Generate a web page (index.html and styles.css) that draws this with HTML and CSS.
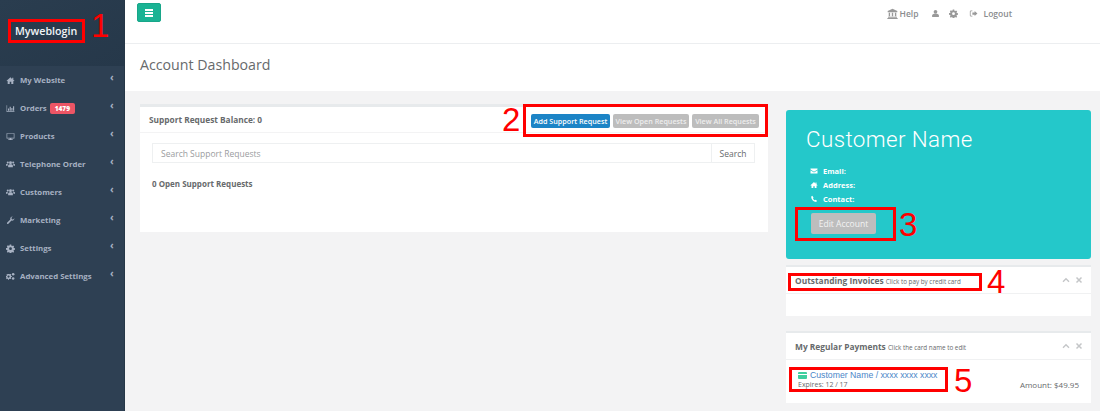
FILE: index.html
```html
<!DOCTYPE html>
<html lang="en">
<head>
<meta charset="utf-8">
<title>Account Dashboard</title>
<link rel="stylesheet" href="styles.css">
</head>
<body>
<svg class="defs" width="0" height="0" aria-hidden="true">
  <symbol id="i-home" viewBox="0 0 16 16"><path d="M8 2 1 8.500l1 1 1-.9V14h3.600v-3.600h2.800V14H13V8.600l1 .9 1-1-2-1.900V3h-2v2.700z"/></symbol>
  <symbol id="i-bars" viewBox="0 0 16 16"><path d="M1 2h1v11h13v1H1z"/><path d="M3.500 8h2v4h-2zM6.500 5h2v7h-2zM9.500 7h2v5h-2zM12.500 4h2v8h-2z"/></symbol>
  <symbol id="i-desk" viewBox="0 0 16 16"><path fill-rule="evenodd" d="M1 2h14v9.500H9.500V13H12v1H4v-1h2.500v-1.500H1zm1.200 1.200v7h11.600v-7z"/></symbol>
  <symbol id="i-users" viewBox="0 0 16 16"><circle cx="8" cy="5" r="2.600"/><circle cx="3.200" cy="4.500" r="1.900"/><circle cx="12.800" cy="4.500" r="1.900"/><path d="M3.800 13V10c0-1.500 1.500-2.500 4.200-2.500s4.200 1 4.200 2.500v3zM0 10V8.500C0 7.300 1.200 6.800 3.700 6.800 3 7.700 2.800 8.700 2.800 10zM16 10V8.500c0-1.200-1.200-1.700-3.700-1.700.7.900.9 1.900.9 3.200z"/></symbol>
  <symbol id="i-wrench" viewBox="0 0 16 16"><path d="M15 4.200a4 4 0 0 1-5.300 3.900L3.800 14a1.500 1.500 0 0 1-2-2l5.900-5.900A4 4 0 0 1 12 1L9.700 3.300l.6 2.300 2.300.6z"/></symbol>
  <symbol id="i-cog" viewBox="0 0 16 16"><path fill-rule="evenodd" d="M6.700 1h2.600l.4 2 1.300.6 1.700-1.100 1.800 1.800-1.100 1.700.6 1.300 2 .4v2.600l-2 .4-.6 1.300 1.100 1.700-1.800 1.800-1.700-1.100-1.300.6-.4 2H6.700l-.4-2-1.300-.6-1.700 1.100-1.800-1.800 1.100-1.700-.6-1.300-2-.4V7.300l2-.4.6-1.300-1.100-1.700 1.800-1.800 1.700 1.100 1.300-.6zM8 5.800a2.500 2.500 0 1 0 0 5 2.500 2.500 0 0 0 0-5z"/></symbol>
  <symbol id="i-cogs" viewBox="0 0 16 16"><path fill-rule="evenodd" d="M5.500 3.500 7 4l1.200-.6 1 1L8.600 5.600l.5 1.300 1.300.4v1.400l-1.300.4-.5 1.300.6 1.200-1 1L7 12.100l-1.500.5-.4 1.300H3.700l-.4-1.300-1.300-.5-1.200.6-.6-.9.6-1.300L.3 9.200 0 8.700V7.300l1-.4.500-1.300L1 4.400l.9-1 1.200.6 1-.5zM4.500 6a2 2 0 1 0 0 4 2 2 0 0 0 0-4z"/><circle cx="12.700" cy="4" r="2.300"/><circle cx="12.700" cy="11.500" r="2.300"/></symbol>
  <symbol id="i-bank" viewBox="0 0 16 16"><path d="M8 1 1 4.500V6h14V4.500zM2.500 7h2v5h-2zM7 7h2v5H7zM11.500 7h2v5h-2zM1.500 12.800h13V14h-13zM.5 14.500h15V16H.5z"/></symbol>
  <symbol id="i-user" viewBox="0 0 16 16"><circle cx="8" cy="5" r="3.300"/><path d="M2 14v-2.500C2 9.500 4 8.300 8 8.300s6 1.200 6 3.200V14z"/></symbol>
  <symbol id="i-logout" viewBox="0 0 16 16"><path d="M6 2.500H3.500a2 2 0 0 0-2 2v7a2 2 0 0 0 2 2H6V12H3.500a.6.600 0 0 1-.6-.6V4.600a.6.600 0 0 1 .6-.6H6z"/><path d="M10 3.500 15 8l-5 4.500V10H6V6h4z"/></symbol>
  <symbol id="i-mail" viewBox="0 0 16 16"><path d="M1 3h14v2L8 9.500 1 5z"/><path d="M1 6.500 8 11l7-4.500V13H1z"/></symbol>
  <symbol id="i-phone" viewBox="0 0 16 16"><path d="M4.500 1.500 2.500 3c-.5 5 4.500 11 10 11l1.500-2.500-3-2-1.500 1.200C8 10 6.500 8 6 6.500L7 5z"/></symbol>
  <symbol id="i-up" viewBox="0 0 8 8"><path d="M1 5.800 4 2.800l3 3" fill="none" stroke="currentColor" stroke-width="1.400"/></symbol>
  <symbol id="i-x" viewBox="0 0 8 8"><path d="M1.500 1.500l5 5M6.500 1.500l-5 5" fill="none" stroke="currentColor" stroke-width="1.500"/></symbol>
</svg>

<div class="app">
  <aside class="sidebar">
    <div class="brand">Myweblogin</div>
    <nav class="nav">
      <a class="nav-item"><svg class="nav-icon"><use href="#i-home"/></svg><span>My Website</span><i class="caret">‹</i></a>
      <a class="nav-item"><svg class="nav-icon"><use href="#i-bars"/></svg><span>Orders</span><b class="badge">1479</b><i class="caret">‹</i></a>
      <a class="nav-item"><svg class="nav-icon"><use href="#i-desk"/></svg><span>Products</span><i class="caret">‹</i></a>
      <a class="nav-item"><svg class="nav-icon"><use href="#i-users"/></svg><span>Telephone Order</span><i class="caret">‹</i></a>
      <a class="nav-item"><svg class="nav-icon"><use href="#i-users"/></svg><span>Customers</span><i class="caret">‹</i></a>
      <a class="nav-item"><svg class="nav-icon"><use href="#i-wrench"/></svg><span>Marketing</span><i class="caret">‹</i></a>
      <a class="nav-item"><svg class="nav-icon"><use href="#i-cog"/></svg><span>Settings</span><i class="caret">‹</i></a>
      <a class="nav-item"><svg class="nav-icon"><use href="#i-cogs"/></svg><span>Advanced Settings</span><i class="caret">‹</i></a>
    </nav>
  </aside>

  <main class="main">
    <header class="topbar">
      <button class="menu-btn" aria-label="Menu"><span></span><span></span><span></span></button>
      <div class="top-links">
        <a class="top-link"><svg class="top-icon"><use href="#i-bank"/></svg>Help</a>
        <a class="top-link"><svg class="top-icon small"><use href="#i-user"/></svg></a>
        <a class="top-link"><svg class="top-icon small"><use href="#i-cog"/></svg></a>
        <a class="top-link"><svg class="top-icon small"><use href="#i-logout"/></svg>Logout</a>
      </div>
    </header>
    <div class="page-head"><h1>Account Dashboard</h1></div>

    <div class="content">
      <section class="left-col">
        <div class="card support">
          <div class="support-head">
            <h2>Support Request Balance: 0</h2>
            <div class="btn-row">
              <button class="btn btn-blue">Add Support Request</button>
              <button class="btn btn-grey">View Open Requests</button>
              <button class="btn btn-grey">View All Requests</button>
            </div>
          </div>
          <div class="support-body">
            <div class="search">
              <span class="search-input">Search Support Requests</span>
              <span class="search-btn">Search</span>
            </div>
            <p class="open-count">0 Open Support Requests</p>
          </div>
        </div>
      </section>

      <section class="right-col">
        <div class="customer">
          <h2>Customer Name</h2>
          <ul class="contact">
            <li><svg class="c-icon"><use href="#i-mail"/></svg>Email:</li>
            <li><svg class="c-icon"><use href="#i-home"/></svg>Address:</li>
            <li><svg class="c-icon"><use href="#i-phone"/></svg>Contact:</li>
          </ul>
          <button class="edit-btn">Edit Account</button>
        </div>

        <div class="card widget invoices">
          <div class="widget-head">
            <h3>Outstanding Invoices <small>Click to pay by credit card</small></h3>
            <span class="tools"><svg class="tool"><use href="#i-up"/></svg><svg class="tool"><use href="#i-x"/></svg></span>
          </div>
        </div>

        <div class="card widget payments">
          <div class="widget-head">
            <h3>My Regular Payments <small>Click the card name to edit</small></h3>
            <span class="tools"><svg class="tool"><use href="#i-up"/></svg><svg class="tool"><use href="#i-x"/></svg></span>
          </div>
          <div class="pay-row">
            <div>
              <a class="pay-name"><span class="card-icon"></span>Customer Name / xxxx xxxx xxxx</a>
              <div class="pay-exp">Expires: 12 / 17</div>
            </div>
            <div class="pay-amount">Amount: $49.95</div>
          </div>
        </div>
      </section>
    </div>
  </main>
</div>

<div class="mark box1"></div><div class="num num1">1</div>
<div class="mark box2"></div><div class="num num2">2</div>
<div class="mark box3"></div><div class="num num3">3</div>
<div class="mark box4"></div><div class="num num4">4</div>
<div class="mark box5"></div><div class="num num5">5</div>
</body>
</html>
```

FILE: styles.css
```css
* { box-sizing: border-box; }
html, body { margin: 0; height: 411px; overflow: hidden; }
body { font-family: "Open Sans", "Liberation Sans", sans-serif; color: #676a6c; background: #f3f3f4; position: relative; }
.defs { position: absolute; }
svg { fill: currentColor; }

.app { display: flex; height: 411px; }

/* Sidebar */
.sidebar { width: 125px; flex: none; background: #2e4053; color: #a7b1c2; border-right: 1px solid #263747; }
.brand { height: 66px; padding: 23px 0 0 15px; background: linear-gradient(150deg, #2a3d4f, #26384a); color: #f2f5f7; font-size: 10.700px; font-weight: 600; line-height: 17px; }
.nav { display: flex; flex-direction: column; }
.nav-item { height: 28px; display: flex; align-items: center; padding: 0 0 0 6px; font-size: 7.800px; font-weight: 700; position: relative; }
.nav-icon { width: 9px; height: 9px; margin-right: 5px; flex: none; }
.caret { position: absolute; left: 110px; top: 5px; font-style: normal; font-size: 10px; line-height: 12px; }
.badge { background: #ed5565; color: #fff; font-size: 6.500px; line-height: 11px; padding: 0 5px; border-radius: 2px; margin-left: 3px; }

/* Main */
.main { flex: 1; min-width: 0; display: flex; flex-direction: column; }
.topbar { height: 44px; background: #fff; border-bottom: 1px solid #eceef0; display: flex; justify-content: space-between; padding: 3px 88px 0 12px; }
.menu-btn { width: 24px; height: 19px; padding: 0; background: #1ab394; border: 1px solid #18a689; border-radius: 2px; display: flex; flex-direction: column; gap: 1px; align-items: center; justify-content: center; }
.menu-btn span { width: 8px; height: 2px; background: #fff; display: block; }
.top-links { display: flex; height: 20px; color: #8a8c8e; font-size: 8.500px; font-weight: 600; }
.top-link { display: flex; align-items: center; gap: 2px; height: 20px; margin-left: 12px; }
.top-link:nth-child(3) { margin-left: 9px; }
.top-icon { width: 11px; height: 11px; color: #999; }
.top-icon.small { width: 9px; height: 9px; }
.top-link:last-child { margin-left: 11px; }
.top-link:last-child .top-icon { margin-right: 4px; }
.page-head { height: 47px; background: #fff; padding: 11px 0 0 15px; }
.page-head h1 { margin: 0; font-size: 14.200px; line-height: 20px; font-weight: 400; color: #676a6c; }

.content { flex: 1; display: flex; padding: 13px 9px 0 15px; }
.left-col { width: 628px; flex: none; }
.right-col { width: 305px; flex: none; margin-left: 18px; padding-top: 6px; display: flex; flex-direction: column; }

.card { background: #fff; border-top: 3px solid #e7eaec; }
.support { height: 128px; }
.support-head { height: 26px; padding: 0 9px; display: flex; align-items: center; justify-content: space-between; border-bottom: 1px solid #f3f3f4; }
.support-head h2 { margin: 0; font-size: 8.300px; font-weight: 700; color: #676a6c; }
.btn-row { display: flex; gap: 3px; padding-top: 3px; }
.btn { height: 14px; border: 0; padding: 0; border-radius: 2px; font-family: inherit; font-size: 7.200px; font-weight: 600; line-height: 14px; color: #fff; }
.btn-blue { width: 79px; background: #1c84c6; }
.btn-grey { width: 76px; background: #bdbdbd; color: #eee; }
.btn-grey:last-child { width: 67px; }
.support-body { padding: 10px 13px 0 12px; }
.search { display: flex; height: 20px; border: 1px solid #eef0f1; font-size: 8.500px; line-height: 19px; }
.search-input { flex: 1; padding-left: 8px; color: #9a9c9e; }
.search-btn { width: 43px; text-align: center; border-left: 1px solid #eef0f1; color: #676a6c; }
.open-count { margin: 15px 0 0; font-size: 8px; line-height: 12px; font-weight: 700; }

.customer { height: 149px; background: #24c8ca; border-radius: 3px; color: #fff; padding: 16px 0 0 20px; }
.customer h2 { margin: 0; font-family: Roboto, "Liberation Sans", sans-serif; font-size: 22.400px; line-height: 26px; font-weight: 300; letter-spacing: .4px; }
.contact { list-style: none; margin: 12px 0 0; padding: 0 0 0 4px; font-size: 7.500px; font-weight: 700; line-height: 14px; }
.contact li { display: flex; align-items: center; gap: 5px; }
.c-icon { width: 8px; height: 8px; }
.edit-btn { display: block; margin: 7px 0 0 5px; width: 65px; height: 21px; border: 0; border-radius: 2px; background: #bdbdbd; color: #f3f3f3; font-family: inherit; font-size: 8.500px; padding: 0; }

.widget { border-top-width: 2px; }
.invoices { margin-top: 6px; height: 51px; }
.payments { margin-top: 15px; height: 72px; }
.widget-head { height: 27px; padding: 0 8px 0 9px; display: flex; align-items: center; justify-content: space-between; border-bottom: 1px solid #f0f1f2; }
.widget-head h3 { margin: 0; font-size: 8.400px; font-weight: 700; color: #676a6c; white-space: nowrap; }
.widget-head small { font-size: 6.300px; font-weight: 400; }
.tools { display: flex; gap: 5px; color: #c4c6c8; }
.tool { width: 8px; height: 8px; }
.pay-row { display: flex; justify-content: space-between; align-items: flex-end; padding: 9px 12px 0 12px; }
.pay-name { display: flex; align-items: center; gap: 3px; color: #4a86c8; font-size: 8.700px; font-family: "Liberation Sans", sans-serif; line-height: 12px; }
.card-icon { width: 9px; height: 7px; background: linear-gradient(#3fcf9f 0 2px, #fff 2px 3px, #3fcf9f 3px); display: inline-block; border-radius: 1px; }
.pay-exp { font-size: 7px; line-height: 10px; color: #676a6c; margin-top: -1px; }
.pay-amount { font-size: 8px; line-height: 11px; }

/* Red annotations drawn over the screenshot */
.mark { position: absolute; border: 3px solid #f00; }
.num { position: absolute; color: #f00; font-family: "Liberation Sans", sans-serif; font-size: 33px; line-height: 33px; }
.box1 { left: 8px; top: 19px; width: 77px; height: 24px; }
.box2 { left: 523px; top: 104px; width: 245px; height: 33px; }
.box3 { left: 795px; top: 207px; width: 101px; height: 34px; }
.box4 { left: 788px; top: 273px; width: 194px; height: 18px; }
.box5 { left: 789px; top: 367px; width: 159px; height: 25px; }
.num1 { left: 91px; top: 9px; }
.num2 { left: 502px; top: 103px; }
.num3 { left: 899px; top: 208px; }
.num4 { left: 987px; top: 265px; }
.num5 { left: 954px; top: 364px; }
```
